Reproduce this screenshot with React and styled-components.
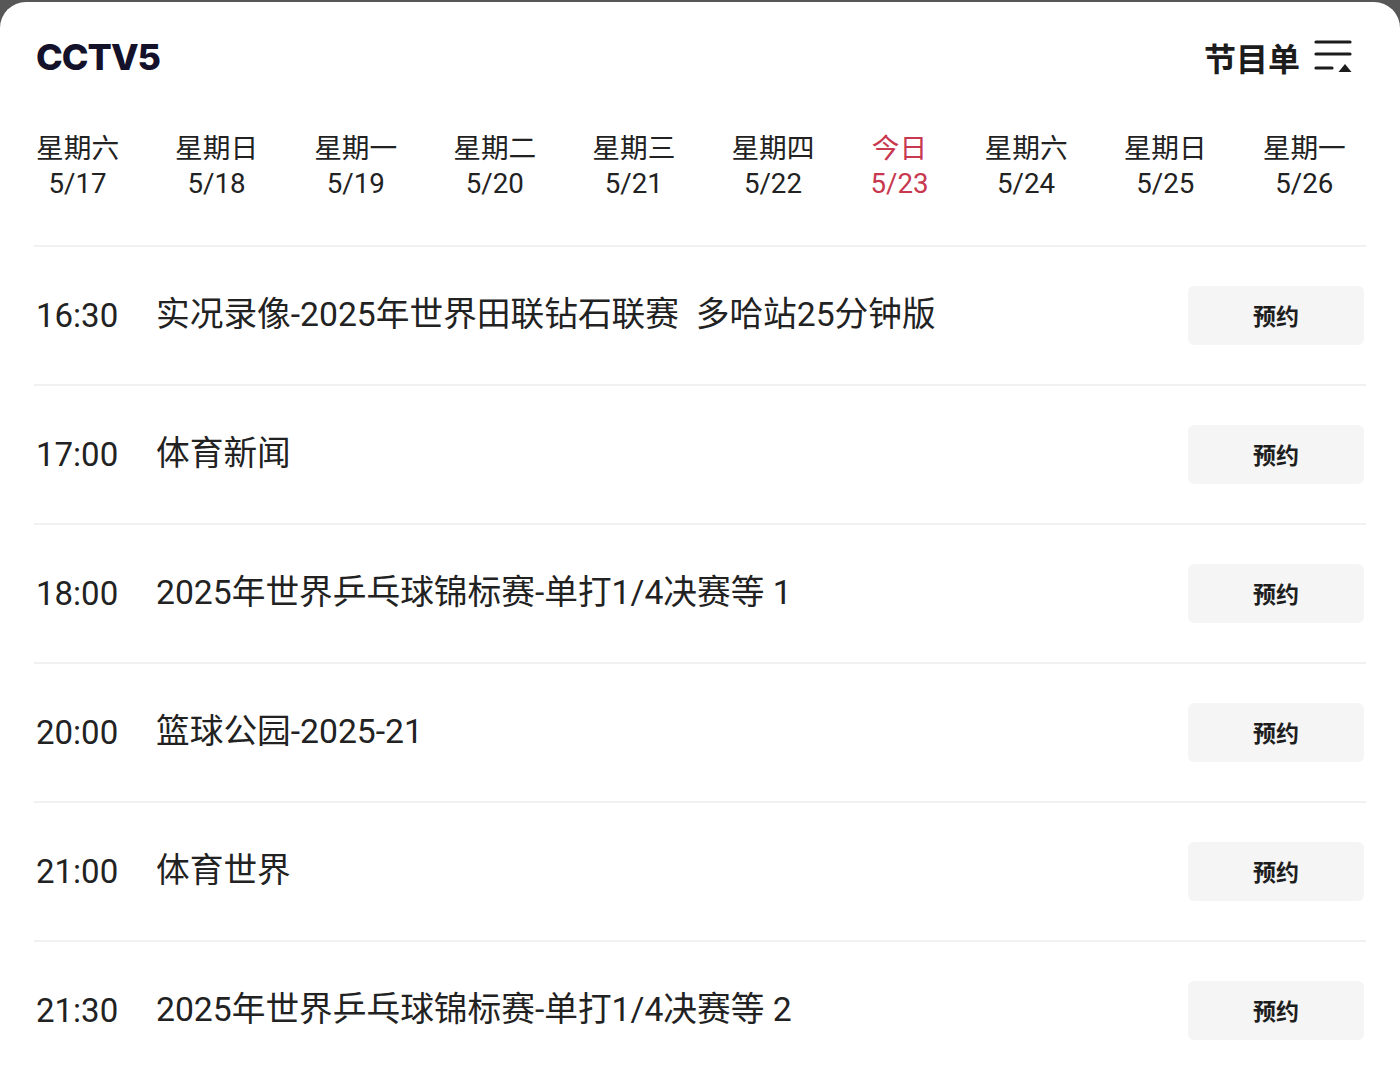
import React from "react";
import styled, { createGlobalStyle } from "styled-components";

const GlobalStyle = createGlobalStyle`
  html, body {
    margin: 0;
    padding: 0;
    background: #575757;
    overflow: hidden;
  }
  * { box-sizing: border-box; }
`;

const FONT = `Roboto, "Noto Sans CJK SC", sans-serif`;

const Sheet = styled.div`
  margin-top: 2px;
  background: #ffffff;
  border-radius: 26px 26px 0 0;
  min-height: 1073px;
  font-family: ${FONT};
  color: #222222;
`;

const Header = styled.header`
  height: 110px;
  padding: 0 46px 0 36px;
  display: flex;
  align-items: center;
  justify-content: space-between;
`;

const Channel = styled.h1`
  margin: 0;
  font-family: Inter, "Noto Sans", sans-serif;
  font-weight: 800;
  font-size: 36px;
  letter-spacing: -1px;
  color: #14122b;
`;

const ListToggle = styled.div`
  display: flex;
  align-items: center;
  gap: 14px;
  font-family: "Noto Sans CJK SC", sans-serif;
  font-weight: 700;
  font-size: 32px;
  color: #1c1c1c;
`;

const DateRow = styled.nav`
  margin-top: 19px;
  padding: 0 36px;
  display: flex;
  gap: 56px;
`;

const DateItem = styled.div`
  display: flex;
  flex-direction: column;
  align-items: center;
  font-size: 27.7px;
  line-height: 35px;
  color: ${(p) => (p.$today ? "#c8384f" : "#222222")};
`;

const Schedule = styled.div`
  margin: 44px 34px 0;
`;

const Row = styled.div`
  height: 139px;
  border-top: 2px solid #f1f1f1;
  display: flex;
  align-items: center;
  padding: 0 2px;
`;

const Time = styled.span`
  width: 120px;
  flex: none;
  font-size: 33px;
  color: #222222;
`;

const Title = styled.span`
  flex: 1;
  font-size: 33.7px;
  white-space: pre;
  color: #222222;
  margin-bottom: 8px;
`;

const Reserve = styled.button`
  width: 176px;
  height: 59px;
  border: none;
  border-radius: 6px;
  background: #f5f5f5;
  font-family: "Noto Sans CJK SC", sans-serif;
  font-weight: 700;
  font-size: 23px;
  color: #1e1e1e;
  margin-bottom: 1px;
`;

const ListIcon = () => (
  <svg width="40" height="36" viewBox="0 0 40 36">
    <g stroke="#1c1c1c" strokeWidth="3.2" strokeLinecap="round">
      <line x1="2" y1="3" x2="36" y2="3" />
      <line x1="2" y1="15" x2="36" y2="15" />
      <line x1="2" y1="29" x2="18" y2="29" />
    </g>
    <polygon points="31,25 37.5,33 24.5,33" fill="#1c1c1c" />
  </svg>
);

const dates = [
  ["星期六", "5/17"],
  ["星期日", "5/18"],
  ["星期一", "5/19"],
  ["星期二", "5/20"],
  ["星期三", "5/21"],
  ["星期四", "5/22"],
  ["今日", "5/23", true],
  ["星期六", "5/24"],
  ["星期日", "5/25"],
  ["星期一", "5/26"],
];

const programs = [
  ["16:30", "实况录像-2025年世界田联钻石联赛  多哈站25分钟版"],
  ["17:00", "体育新闻"],
  ["18:00", "2025年世界乒乓球锦标赛-单打1/4决赛等 1"],
  ["20:00", "篮球公园-2025-21"],
  ["21:00", "体育世界"],
  ["21:30", "2025年世界乒乓球锦标赛-单打1/4决赛等 2"],
];

export default function App() {
  return (
    <>
      <GlobalStyle />
      <Sheet>
        <Header>
          <Channel>CCTV5</Channel>
          <ListToggle>
            节目单
            <ListIcon />
          </ListToggle>
        </Header>

        <DateRow>
          {dates.map(([day, date, today]) => (
            <DateItem key={date} $today={today}>
              <span>{day}</span>
              <span>{date}</span>
            </DateItem>
          ))}
        </DateRow>

        <Schedule>
          {programs.map(([time, title]) => (
            <Row key={time}>
              <Time>{time}</Time>
              <Title>{title}</Title>
              <Reserve>预约</Reserve>
            </Row>
          ))}
        </Schedule>
      </Sheet>
    </>
  );
}
